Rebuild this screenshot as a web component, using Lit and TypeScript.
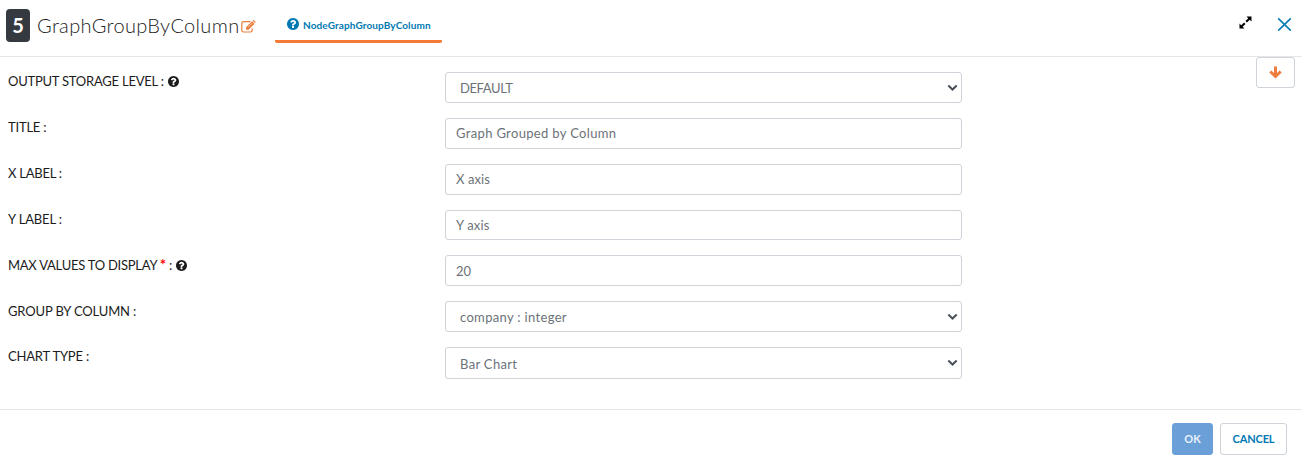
import { LitElement, html, css, svg, nothing } from "lit";
import { customElement } from "lit/decorators.js";
import { styleMap } from "lit/directives/style-map.js";

interface Field {
  label: string;
  value: string;
  kind: "text" | "select";
  labelSpacing: number;
  valueSpacing: number;
  required?: boolean;
  help?: boolean;
}

const FIELDS: Field[] = [
  { label: "OUTPUT STORAGE LEVEL", value: "DEFAULT", kind: "select", labelSpacing: -0.23, valueSpacing: -0.4, help: true },
  { label: "TITLE", value: "Graph Grouped by Column", kind: "text", labelSpacing: -0.2, valueSpacing: 0.34 },
  { label: "X LABEL", value: "X axis", kind: "text", labelSpacing: -0.25, valueSpacing: 0.1 },
  { label: "Y LABEL", value: "Y axis", kind: "text", labelSpacing: -0.15, valueSpacing: 0.15 },
  { label: "MAX VALUES TO DISPLAY", value: "20", kind: "text", labelSpacing: -0.25, valueSpacing: 0, required: true, help: true },
  { label: "GROUP BY COLUMN", value: "company : integer", kind: "select", labelSpacing: -0.15, valueSpacing: 0.33 },
  { label: "CHART TYPE", value: "Bar Chart", kind: "select", labelSpacing: -0.18, valueSpacing: 0.33 },
];

const helpShape = svg`<path fill="currentColor" d="M1024 1376v-192q0-14-9-23t-23-9h-192q-14 0-23 9t-9 23v192q0 14 9 23t23 9h192q14 0 23-9t9-23zm256-672q0-88-55.500-163t-138.500-116-170-41q-243 0-371 213-15 24 8 42l132 100q7 6 19 6 16 0 25-12 53-68 86-92 34-24 86-24 48 0 85.500 26t37.500 59q0 38-20 61t-68 45q-63 28-115.500 86.500t-52.500 125.500v36q0 14 9 23t23 9h192q14 0 23-9t9-23q0-19 21.500-49.500t54.500-49.500q32-18 49-28.500t46-35 44.500-48 28-60.500 12.500-81zm384 192q0 209-103 385.500t-279.500 279.500-385.500 103-385.500-103-279.500-279.500-103-385.500 103-385.500 279.500-279.500 385.500-103 385.500 103 279.500 279.500 103 385.500z"/>`;

@customElement("app-root")
export class AppRoot extends LitElement {
  static styles = css`
    :host {
      display: flex;
      flex-direction: column;
      box-sizing: border-box;
      height: 459px;
      background: #fff;
      color: #1c1c1c;
      font: 13px/18px Lato, "Open Sans", sans-serif;
    }
    * { box-sizing: border-box; }
    svg { display: block; flex: none; }
    header {
      display: flex;
      align-items: flex-start;
      height: 57px;
      padding-left: 6px;
      border-bottom: 1px solid #e6e6e6;
    }
    .badge {
      width: 24px;
      height: 33px;
      margin-top: 9px;
      border-radius: 4px;
      background: #343a40;
      color: #fff;
      font-size: 20px;
      font-weight: 700;
      line-height: 33px;
      text-align: center;
    }
    h1 {
      width: 204px;
      margin: 13px 0 0 7px;
      font-size: 20px;
      font-weight: 300;
      line-height: 25px;
      letter-spacing: 0.36px;
      white-space: nowrap;
      color: #222;
    }
    .edit { margin: 20px 0 0; color: #ed7d3d; }
    .tab {
      display: flex;
      width: 167px;
      height: 34px;
      margin: 9px 0 0 19px;
      padding: 9px 0 0 12px;
      gap: 4px;
      border-bottom: 3px solid #f47b38;
      border-radius: 2px;
      color: #0079b3;
      font-size: 10px;
      font-weight: 700;
      line-height: 15px;
      letter-spacing: 0.11px;
      white-space: nowrap;
    }
    .tools { display: flex; gap: 25px; margin: 16px 10px 0 auto; }
    .close { margin-top: 1px; color: #0079b3; }
    main { display: flex; height: 352px; padding: 0 7px 0 8px; }
    form { display: flex; flex-direction: column; gap: 15px; width: 954px; padding-top: 15.1px; }
    .row { display: grid; grid-template-columns: 437px 517px; height: 30.83px; }
    .row:last-child { height: 32px; }
    .label { display: flex; height: 18px; margin-top: 0.3px; white-space: pre; }
    .label svg { margin: 4px 0 0 4px; }
    .star { color: #f00; font-size: 15px; font-weight: 700; line-height: 10px; }
    .control { display: flex; position: relative; }
    input, select {
      appearance: none;
      width: 100%;
      height: 100%;
      margin: 0;
      padding: 0 10px;
      border: 1px solid #ced4da;
      border-radius: 3px;
      outline: none;
      background: #fff;
      color: #6c7278;
      font: 13px/18px Lato, "Open Sans", sans-serif;
      letter-spacing: inherit;
    }
    select { padding: 1px 14px 0; }
    .chevron { position: absolute; right: 4px; top: 12px; pointer-events: none; }
    .down {
      display: flex;
      align-items: center;
      justify-content: center;
      width: 39px;
      height: 31px;
      margin-left: auto;
      padding: 0;
      border: 1px solid #ced4da;
      border-radius: 3px;
      background: #fff;
      color: #ed7d3d;
    }
    footer {
      display: flex;
      justify-content: flex-end;
      gap: 7px;
      height: 50px;
      padding: 13px 15px 0 0;
      border-top: 1px solid #e6e6e6;
    }
    footer button {
      height: 32px;
      padding: 0;
      border-radius: 3px;
      font: 700 11px/16px Lato, "Open Sans", sans-serif;
    }
    .ok { width: 41px; border: 1px solid #6a9fd8; background: #6a9fd8; color: #e9f2fb; }
    .cancel { width: 67px; border: 1px solid #ced4da; background: #fff; color: #0079b3; letter-spacing: -0.15px; }
  `;

  private helpIcon(size: number) {
    return html`<svg width=${size} height=${size} viewBox="128 128 1536 1536">${helpShape}</svg>`;
  }

  private row(f: Field) {
    return html`<div class="row">
      <div class="label"><span style=${styleMap({ letterSpacing: `${f.labelSpacing}px` })}>${f.label}${f.required ? html` <span class="star">*</span>` : nothing} :</span>${f.help ? this.helpIcon(11) : nothing}</div>
      <div class="control" style=${styleMap({ letterSpacing: `${f.valueSpacing}px` })}>
        ${f.kind === "text"
          ? html`<input .value=${f.value} />`
          : html`<select><option>${f.value}</option></select>
              <svg class="chevron" width="11" height="8" viewBox="0 0 11 8"><path d="M1.300 1.500L5.500 5.500L9.700 1.500" fill="none" stroke="#495057" stroke-width="2"/></svg>`}
      </div>
    </div>`;
  }

  render() {
    return html`
      <header>
        <div class="badge">5</div>
        <h1>GraphGroupByColumn</h1>
        <svg class="edit" width="15" height="14" viewBox="0 0 15 14" fill="none" stroke="currentColor">
          <path d="M9.500 1.600H2.500Q0.800 1.600 0.800 3.300V10.300Q0.800 12 2.500 12H9.500Q11.200 12 11.200 10.300V8.500" stroke-width="1.200"/>
          <path fill="currentColor" stroke="none" d="M5 7.200L11 1.200L13.500 3.700L7.500 9.700H5zM11.600 0.700L12 0.300Q12.500 -0.100 13 0.300L14.400 1.700Q14.800 2.200 14.400 2.700L14 3.100z"/>
          <path d="M7 7.200L11 3.200" stroke="#fff" stroke-width="0.500"/>
        </svg>
        <div class="tab">${this.helpIcon(12)}<span>NodeGraphGroupByColumn</span></div>
        <div class="tools">
          <svg width="13" height="13" viewBox="0 0 13 13">
            <path fill="#000" d="M7.500 0.500H12.500V5.500zM0.500 7.500V12.500H5.500z"/>
            <path stroke="#000" stroke-width="2" d="M10.800 2.200L7.200 5.800M5.800 7.200L2.200 10.800"/>
          </svg>
          <svg class="close" width="15" height="15" viewBox="0 0 15 15"><path d="M1.200 1.400L13.800 13.600M13.800 1.400L1.200 13.600" stroke="currentColor" stroke-width="1.500"/></svg>
        </div>
      </header>
      <main>
        <form>${FIELDS.map((f) => this.row(f))}</form>
        <button class="down" type="button" aria-label="Move down">
          <svg width="13" height="13" viewBox="0 0 13 13" fill="none" stroke="currentColor" stroke-width="3"><path d="M6.500 0.500V10.500M1.300 5.500L6.500 10.500L11.700 5.500"/></svg>
        </button>
      </main>
      <footer>
        <button class="ok" type="button">OK</button>
        <button class="cancel" type="button">CANCEL</button>
      </footer>
    `;
  }
}
